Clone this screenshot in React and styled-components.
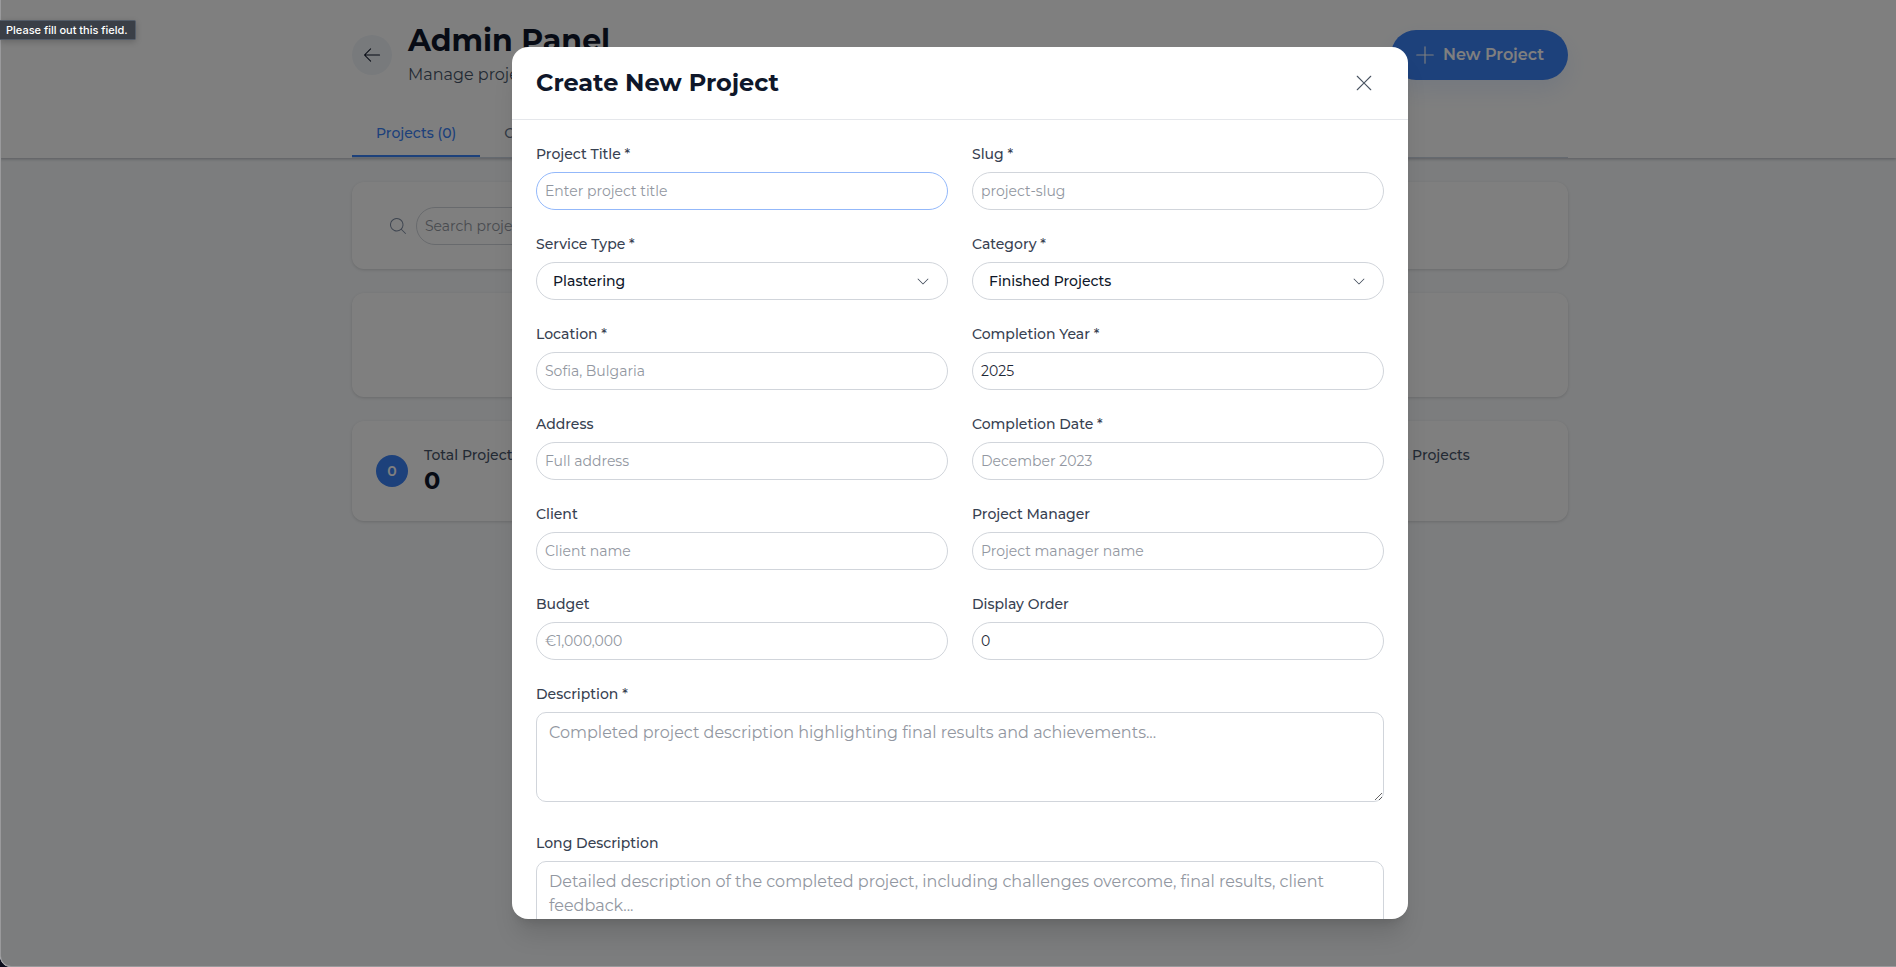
import React from 'react'
import styled, { createGlobalStyle } from 'styled-components'
import { PiArrowLeftLight, PiPlusLight, PiXLight, PiCaretDownLight, PiMagnifyingGlassLight } from 'react-icons/pi'

const GlobalStyle = createGlobalStyle`
  *, *::before, *::after {
    box-sizing: border-box;
  }
  body {
    margin: 0;
    background: #0b0d1c;
    color: #0f172a;
    font-family: Montserrat, Inter, sans-serif;
    font-size: 14px;
    line-height: 20px;
    overflow: hidden;
  }
  button, input, select, textarea {
    font: inherit;
    color: inherit;
  }
  h1, h2, p {
    margin: 0;
  }
`;

const Page = styled.div`
  position: relative;
  min-height: 100vh;
  background: #f8fafc;
  border-bottom-left-radius: 11px;
  overflow: hidden;
`;

const Container = styled.div`
  max-width: 1280px;
  margin: 0 auto;
  padding: 0 32px;
`;

const Header = styled.header`
  padding: 24px 0 0 24px;
  background: #fff;
  box-shadow: 0 1px 3px rgba(15, 23, 42, 0.3);
`;

const TitleRow = styled.div`
  display: flex;
  align-items: center;
  gap: 16px;
  height: 62px;
`;

const BackButton = styled.button`
  display: flex;
  align-items: center;
  justify-content: center;
  width: 40px;
  height: 40px;
  padding: 0;
  border: none;
  border-radius: 50%;
  background: #f1f5f9;
`;

const Heading = styled.div`
  flex: 1;
  h1 {
    font-size: 30px;
    font-weight: 700;
    line-height: 36px;
  }
  p {
    margin-top: 4px;
    font-size: 16px;
    line-height: 24px;
    color: #475569;
  }
`;

const NewButton = styled.button`
  display: flex;
  align-items: center;
  gap: 6px;
  height: 50px;
  padding: 0 24px 0 22px;
  border: none;
  border-radius: 25px;
  background: #3b82f6;
  color: #fff;
  font-size: 16px;
  font-weight: 600;
  box-shadow: 0 10px 24px rgba(59, 130, 246, 0.12);
`;

const Tabs = styled.nav`
  display: flex;
  margin-top: 24px;
  border-bottom: 1px solid #cbd5e1;
`;

const Tab = styled.button`
  padding: 13px 24px 12px;
  border: none;
  border-bottom: 2px solid ${prop => prop.$active ? '#3b82f6' : 'transparent'};
  background: none;
  color: ${prop => prop.$active ? '#3b82f6' : '#64748b'};
  font-weight: 500;
`;

const Main = styled.main`
  padding: 24px 0 0 24px;
`;

const Card = styled.section`
  display: flex;
  align-items: center;
  min-height: ${prop => prop.$height};
  margin-bottom: 24px;
  padding: 24px;
  border-radius: 12px;
  background: #fff;
  box-shadow: 0 1px 3px rgba(0, 0, 0, 0.15);
`;

const Search = styled.label`
  display: flex;
  align-items: center;
  gap: 8px;
  padding-left: 12px;
  color: #7c8aa0;
  input {
    width: 400px;
  }
`;

const Stats = styled.div`
  display: grid;
  flex: 1;
  grid-template-columns: repeat(4, 1fr);
  gap: 72px;
`;

const Stat = styled.div`
  display: flex;
  align-items: center;
  gap: 16px;
  color: #475569;
  white-space: nowrap;
  font-weight: 500;
  strong {
    display: block;
    color: #0f172a;
    font-size: 24px;
    line-height: 32px;
  }
`;

const StatBadge = styled.span`
  display: flex;
  align-items: center;
  justify-content: center;
  width: 32px;
  height: 32px;
  border-radius: 50%;
  background: #3b82f6;
  color: #fff;
  font-weight: 600;
`;

const Overlay = styled.div`
  position: absolute;
  inset: 0;
  display: flex;
  justify-content: center;
  padding: 47px 0 47px 23px;
  border: solid #9a9a9c;
  border-width: 0 0 1px 1px;
  border-bottom-left-radius: 11px;
  background: rgba(0, 0, 0, 0.5);
`;

const Modal = styled.div`
  display: flex;
  flex-direction: column;
  width: 100%;
  max-width: 896px;
  border-radius: 16px;
  background: #fff;
  overflow: hidden;
  box-shadow: 0 20px 25px -5px rgba(0, 0, 0, 0.12), 0 8px 10px -6px rgba(0, 0, 0, 0.12);
`;

const ModalHeader = styled.div`
  display: flex;
  flex-shrink: 0;
  align-items: center;
  justify-content: space-between;
  height: 73px;
  padding: 0 32px 0 24px;
  border-bottom: 1px solid #e5e7eb;
  h2 {
    font-size: 24px;
    font-weight: 700;
    line-height: 32px;
  }
`;

const CloseButton = styled.button`
  display: flex;
  padding: 0;
  border: none;
  background: none;
  color: #4b5563;
`;

const Form = styled.form`
  display: flex;
  flex: 1;
  flex-direction: column;
  min-height: 0;
  padding: 24px;
  overflow: hidden;
`;

const FieldGrid = styled.div`
  display: grid;
  flex-shrink: 0;
  grid-template-columns: 1fr 1fr;
  gap: 24px;
  margin-bottom: 24px;
`;

const Field = styled.div`
  display: flex;
  flex-shrink: 0;
  flex-direction: column;
  gap: 8px;
  label {
    color: #374151;
    font-weight: 500;
  }
`;

const Input = styled.input`
  width: 100%;
  height: 38px;
  padding: 0 8px;
  border: 1px solid #d1d5db;
  border-radius: 19px;
  outline: none;
  background: transparent;
  color: #1f2937;
  &:focus {
    border-color: #93b8fa;
  }
  &::placeholder {
    color: #9297a1;
  }
`;

const SelectWrap = styled.div`
  display: grid;
  align-items: center;
  select, svg {
    grid-area: 1 / 1;
  }
  svg {
    justify-self: end;
    margin-right: 17px;
    color: #374151;
    pointer-events: none;
  }
`;

const Select = styled.select`
  width: 100%;
  height: 38px;
  padding: 0 40px 0 16px;
  border: 1px solid #d1d5db;
  border-radius: 19px;
  appearance: none;
  background: #fff;
  font-weight: 500;
`;

const TextArea = styled.textarea`
  width: 100%;
  margin-bottom: 31px;
  padding: 8px 12px;
  border: 1px solid #d1d5db;
  border-radius: 10px;
  font-size: 16px;
  line-height: 24px;
  resize: vertical;
  &::placeholder {
    color: #9297a1;
  }
`;

const Hint = styled.div`
  position: absolute;
  top: 20px;
  left: 0;
  padding: 0 7px 0 6px;
  border: 1px solid #535c68;
  border-left: none;
  border-radius: 0 2px 2px 0;
  background: #3a3f47;
  color: #fff;
  font-family: Inter, sans-serif;
  font-size: 11px;
  font-weight: 500;
  line-height: 18px;
  box-shadow: 0 2px 6px rgba(0, 0, 0, 0.2);
`;

const fields = [
  { id: 'title', label: 'Project Title *', placeholder: 'Enter project title', autoFocus: true },
  { id: 'slug', label: 'Slug *', placeholder: 'project-slug' },
  { id: 'service', label: 'Service Type *', options: ['Plastering'] },
  { id: 'category', label: 'Category *', options: ['Finished Projects'] },
  { id: 'location', label: 'Location *', placeholder: 'Sofia, Bulgaria' },
  { id: 'year', label: 'Completion Year *', defaultValue: '2025' },
  { id: 'address', label: 'Address', placeholder: 'Full address' },
  { id: 'date', label: 'Completion Date *', placeholder: 'December 2023' },
  { id: 'client', label: 'Client', placeholder: 'Client name' },
  { id: 'manager', label: 'Project Manager', placeholder: 'Project manager name' },
  { id: 'budget', label: 'Budget', placeholder: '€1,000,000' },
  { id: 'order', label: 'Display Order', defaultValue: '0' },
]

const stats = ['Total Projects', 'Finished', 'Ongoing', 'Current Projects']

function FormField({ id, label, options, ...rest }) {
  return (
    <Field>
      <label htmlFor={id}>{label}</label>
      {options ? (
        <SelectWrap>
          <Select id={id}>
            {options.map(option => <option key={option}>{option}</option>)}
          </Select>
          <PiCaretDownLight size={16} />
        </SelectWrap>
      ) : (
        <Input id={id} {...rest} />
      )}
    </Field>
  )
}

function ProjectModal() {
  return (
    <Modal role='dialog' aria-labelledby='modal-title'>
      <ModalHeader>
        <h2 id='modal-title'>Create New Project</h2>
        <CloseButton aria-label='Close'><PiXLight size={24} /></CloseButton>
      </ModalHeader>
      <Form>
        <FieldGrid>
          {fields.map(field => <FormField key={field.id} {...field} />)}
        </FieldGrid>
        <Field>
          <label htmlFor='description'>Description *</label>
          <TextArea id='description' rows={3} placeholder='Completed project description highlighting final results and achievements...' />
        </Field>
        <Field>
          <label htmlFor='long'>Long Description</label>
          <TextArea id='long' rows={5} placeholder='Detailed description of the completed project, including challenges overcome, final results, client feedback...' />
        </Field>
      </Form>
    </Modal>
  )
}

export default function App() {
  return (
    <Page>
      <GlobalStyle />
      <Header>
        <Container>
          <TitleRow>
            <BackButton aria-label='Back'><PiArrowLeftLight size={22} /></BackButton>
            <Heading>
              <h1>Admin Panel</h1>
              <p>Manage projects</p>
            </Heading>
            <NewButton><PiPlusLight size={24} />New Project</NewButton>
          </TitleRow>
          <Tabs>
            <Tab $active>Projects (0)</Tab>
            <Tab>Content</Tab>
          </Tabs>
        </Container>
      </Header>
      <Main>
        <Container>
          <Card $height='87px'>
            <Search>
              <PiMagnifyingGlassLight size={20} />
              <Input aria-label='Search' placeholder='Search projects...' />
            </Search>
          </Card>
          <Card $height='104px' />
          <Card $height='100px'>
            <Stats>
              {stats.map(name => (
                <Stat key={name}>
                  <StatBadge>0</StatBadge>
                  <div>{name}<strong>0</strong></div>
                </Stat>
              ))}
            </Stats>
          </Card>
        </Container>
      </Main>
      <Overlay>
        <ProjectModal />
      </Overlay>
      <Hint role='tooltip'>Please fill out this field.</Hint>
    </Page>
  )
}
